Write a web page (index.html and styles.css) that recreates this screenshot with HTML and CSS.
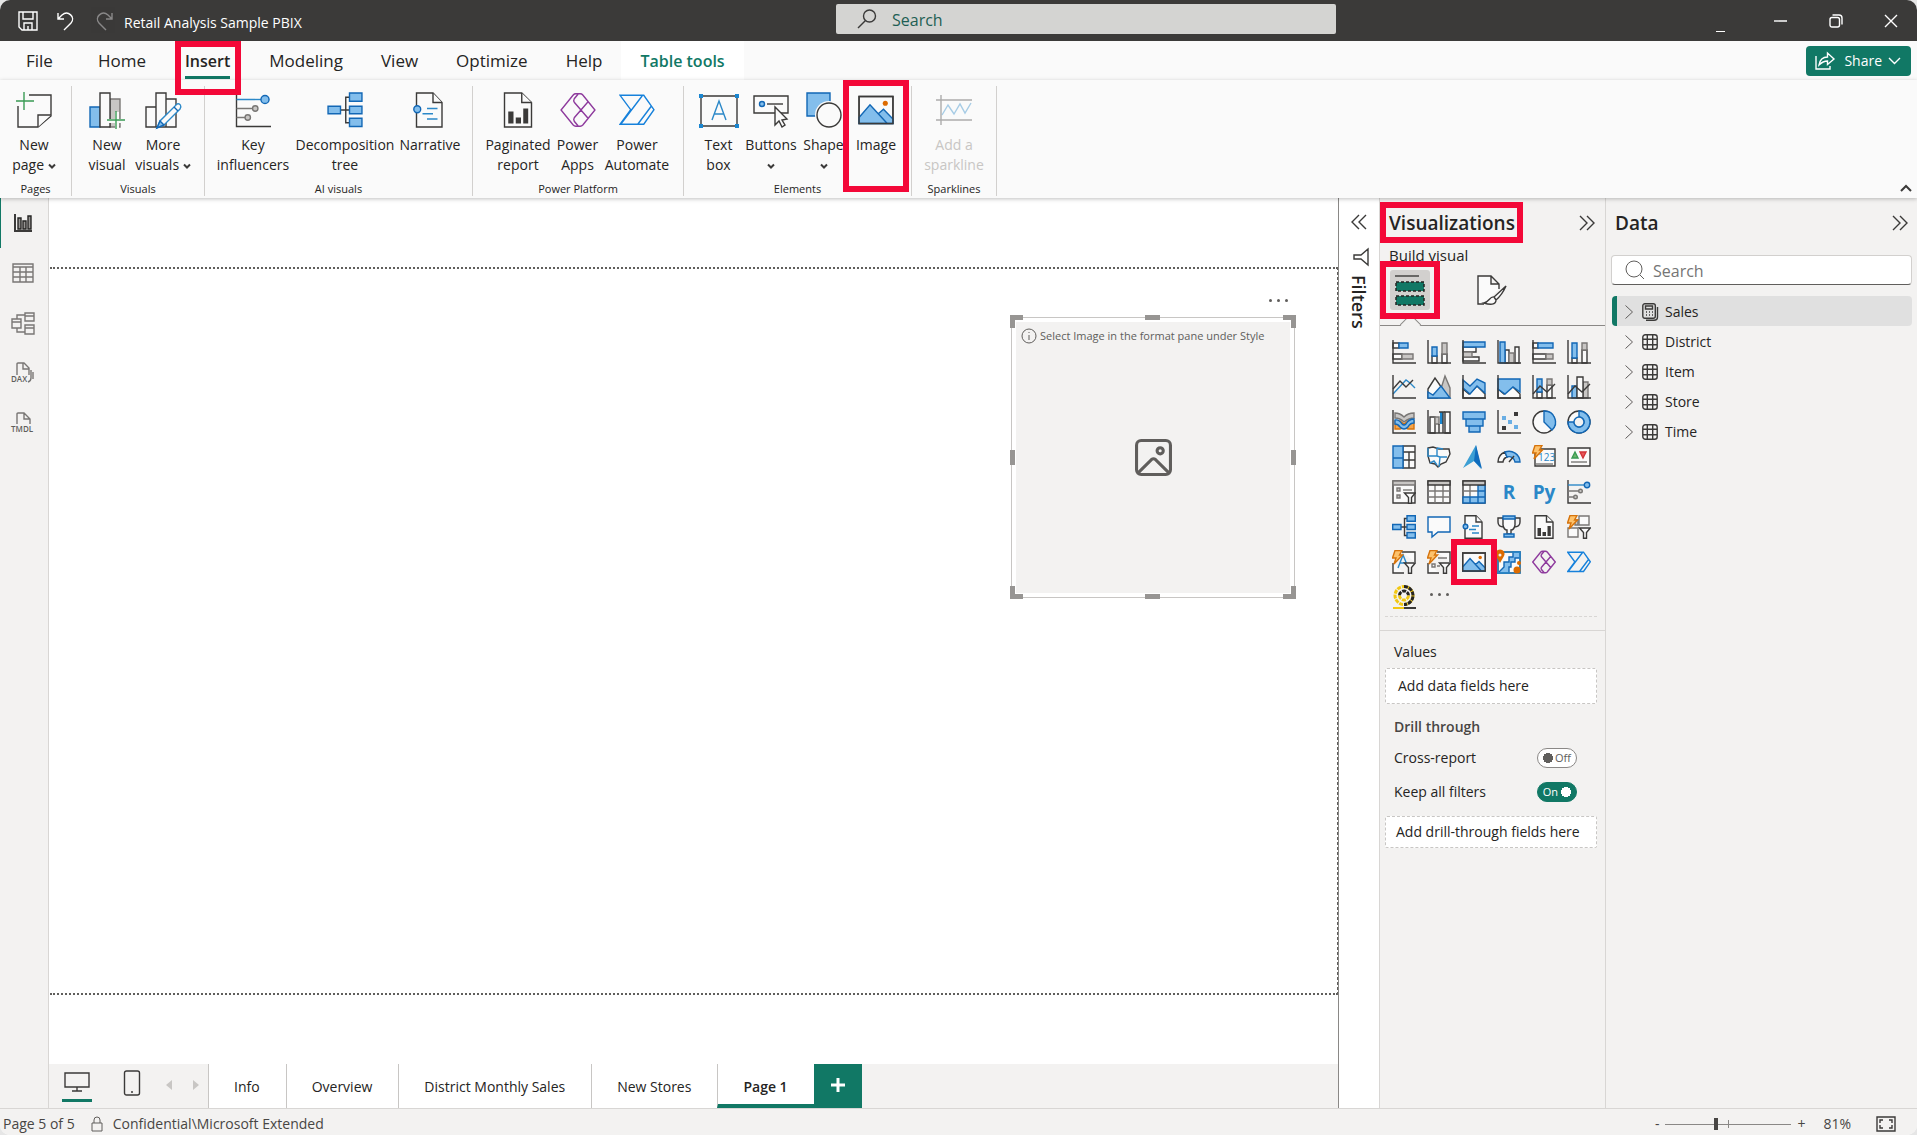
FILE: index.html
```
<!DOCTYPE html>
<html lang="en">
  <head>
    <meta charset="utf-8" />
    <meta name="viewport" content="width=device-width, initial-scale=1" />
    <title>Retail Analysis Sample PBIX</title>
    <link rel="stylesheet" href="styles.css">
  </head>
  <body>
    <!-- shared icons -->
    <svg class="sprite" aria-hidden="true">
      <symbol id="i-axis" viewBox="0 0 24 24"><path class="k" d="M1 0V23H24" /></symbol>
      <symbol id="i-key" viewBox="0 0 24 24">
        <path class="k" d="M1 0V23H24" />
        <path class="bl" d="M1 5H18" /><path class="gl" d="M1 11H12M1 17H7" />
        <circle class="b" cx="20" cy="5" r="2.7" /><circle class="g" cx="13.5" cy="11" r="1.8" /><circle class="g" cx="8.500" cy="17" r="1.8" />
      </symbol>
      <symbol id="i-tree" viewBox="0 0 24 24">
        <path class="k" d="M9 12H15M15 3.500H12.500V20.500H15" />
        <path class="b" d="M.7 9.500H9V14.500H.7ZM15 .7H23.300V6.200H15ZM15 9.500H23.300V14.500H15ZM15 17.500H23.300V23H15Z" />
      </symbol>
      <symbol id="i-narrative" viewBox="0 0 24 24">
        <path class="w" d="M3 .7H14L20 7V23.300H3Z" /><path class="w" d="M14 .7V7H20" />
        <path class="bl" d="M10 11H17M7 14.500H14M10 18H17" />
        <circle class="b" cx="3.500" cy="11.500" r="2.300" />
      </symbol>
      <symbol id="i-paginated" viewBox="0 0 24 24">
        <path class="w" d="M3 .7H14.500L21 7V23.300H3Z" /><path class="w" d="M14.500 .7V7H21" />
        <path class="solid" d="M5.500 13H9V21H5.500ZM10.500 17H14V21H10.500ZM15.500 11H18.800V21H15.500Z" />
      </symbol>
      <symbol id="i-apps" viewBox="0 0 24 24">
        <path class="pl" d="M10.500 1.200H13.500Q14.500 1.200 15.200 2L23.300 12L15.200 22Q14.500 22.800 13.500 22.800H10.500Q9.500 22.800 8.800 22L.7 12L8.800 2Q9.500 1.200 10.500 1.200ZM12 1.500L9.500 4.500Q8.800 5.800 9.500 6.800L18.700 17.500M18.700 6.500L9.500 17.200Q8.800 18.200 9.500 19.500L12 22.500" />
      </symbol>
      <symbol id="i-automate" viewBox="0 0 24 24">
        <path class="fl" d="M.7 2.200H16.500L23.300 11.800L16.500 21.500H.7L7.800 11.800ZM15.500 2.500L1.500 21M21.500 9.500L12.500 21.500" />
      </symbol>
      <symbol id="i-image" viewBox="0 0 24 24">
        <path class="w" d="M.7 3H23.300V21H.7Z" />
        <path class="b" d="M.7 17L8 8.500L13.500 14.500L17 11.500L23.300 18V21H.7ZM13.500 14.500L19.500 21" />
        <path class="k" d="M.7 3H23.300V21H.7Z" /><circle class="orange" cx="18.200" cy="7.500" r="1.700" />
      </symbol>
      <symbol id="i-funnel" viewBox="0 0 24 24"><path class="w" d="M12.500 13H23.300L19.500 17.500V23.300H16.500V17.500Z" /></symbol>
      <symbol id="i-bolt" viewBox="0 0 24 24"><path class="bolt" d="M3 .5H10L7.500 5H10.500L2 14L4 8H.5Z" /></symbol>
      <symbol id="i-down" viewBox="0 0 8 8"><path class="thick" d="M1 2.500L4 5.500L7 2.500" /></symbol>
      <symbol id="i-right2" viewBox="0 0 16 16"><path class="k" d="M1 1L8 8L1 15M8 1L15 8L8 15" /></symbol>
      <symbol id="i-left2" viewBox="0 0 16 16"><path class="k" d="M8 1L1 8L8 15M15 1L8 8L15 15" /></symbol>
      <symbol id="i-chev" viewBox="0 0 8 14"><path class="tl" d="M.5 .5L7.500 7L.5 13.500" /></symbol>
      <symbol id="i-table" viewBox="0 0 16 16"><rect class="k" x=".8" y=".8" width="14.400" height="14.400" rx="2.500" /><path class="k" d="M5.300 1V15M10.700 1V15M1 5.300H15M1 10.700H15" /></symbol>
    </svg>

    <div class="app">
      <header class="titlebar">
        <div class="title-left">
          <button class="icon-btn" aria-label="Save"><svg width="20" height="20" viewBox="0 0 20 20"><path class="hl" d="M1 1H19V19H4L1 16ZM5 1V8H15V1M6 19V12H14V19M10 15V19" /></svg></button>
          <button class="icon-btn" aria-label="Undo"><svg width="20" height="20" viewBox="0 0 20 20"><path class="hl" d="M2 2V8H8M2 8L6 4C12 -1 20 6 15 12L8 19" /></svg></button>
          <button class="icon-btn dim" aria-label="Redo"><svg width="20" height="20" viewBox="0 0 20 20"><path class="hl" d="M18 2V8H12M18 8L14 4C8 -1 0 6 5 12L12 19" /></svg></button>
          <h1 class="doc-title">Retail Analysis Sample PBIX</h1>
        </div>
        <label class="top-search">
          <svg width="20" height="20" viewBox="0 0 20 20"><circle class="k" cx="12.500" cy="7" r="6" /><path class="k" d="M8.500 11.500L1 19" /></svg>
          <input type="text" placeholder="Search" aria-label="Search" />
        </label>
        <div class="window-controls">
          <span class="account"></span>
          <button class="icon-btn" aria-label="Minimize"><svg width="14" height="14" viewBox="0 0 14 14"><path class="hl" d="M0 7H13" /></svg></button>
          <button class="icon-btn" aria-label="Restore"><svg width="14" height="14" viewBox="0 0 14 14"><rect class="hl" x="1" y="3.500" width="9.500" height="9.500" rx="2" /><path class="hl" d="M3.500 1H10Q13 1 13 4V10.500" /></svg></button>
          <button class="icon-btn" aria-label="Close"><svg width="14" height="14" viewBox="0 0 14 14"><path class="hl" d="M1 1L13 13M13 1L1 13" /></svg></button>
        </div>
      </header>

      <nav class="menu">
        <button class="menu-tab file">File</button>
        <button class="menu-tab">Home</button>
        <button class="menu-tab active">Insert<span class="mark mark-insert"></span></button>
        <button class="menu-tab">Modeling</button>
        <button class="menu-tab">View</button>
        <button class="menu-tab">Optimize</button>
        <button class="menu-tab">Help</button>
        <button class="menu-tab context">Table tools</button>
        <button class="share">
          <svg width="20" height="20" viewBox="0 0 20 20"><path class="hl" d="M1 5V18H15V15M4 14C5 8 8 6 12.500 6V2L19 8L12.500 13.500V10C9 10 7 11 4 14Z" /></svg>
          Share
          <svg width="13" height="8" viewBox="0 0 13 8"><path class="hl" d="M1 1L6.500 6.500L12 1" /></svg>
        </button>
      </nav>

      <div class="ribbon">
        <section class="group pages">
          <div class="tools">
            <button class="tool"><svg class="tool-icon" viewBox="0 0 36 36"><path class="w" d="M13 3H35V24L22 35H2V14" /><path class="w" d="M35 23H22V35" /><path class="add" d="M8 0V18M0 9H18" /></svg><span>New<br />page <svg class="caret"><use href="#i-down" /></svg></span></button>
          </div>
          <h2>Pages</h2>
        </section>
        <section class="group visuals">
          <div class="tools">
            <button class="tool"><svg class="tool-icon" viewBox="0 0 36 36"><path class="g" d="M21 7H31V35H21Z" /><path class="b" d="M1 15H11V35H1Z" /><path class="w" d="M11 1H21V35H11Z" /><path class="cover" d="M28 20V36M18 29H36" /><path class="add" d="M27 19V37M18 28H36" /></svg><span>New<br />visual</span></button>
            <button class="tool"><svg class="tool-icon" viewBox="0 0 36 36"><path class="w" d="M21 7H31V35H21ZM1 15H11V35H1ZM11 1H21V35H11Z" /><path class="pencil" d="M12 36L15 29L32 12C35 11 37 14 35 17L19 33Z" /><path class="b" d="M12 36L15 29L19 33ZM29 15L33 19" /></svg><span>More<br />visuals <svg class="caret"><use href="#i-down" /></svg></span></button>
          </div>
          <h2>Visuals</h2>
        </section>
        <section class="group ai">
          <div class="tools">
            <button class="tool wide"><svg class="tool-icon"><use href="#i-key" /></svg><span>Key<br />influencers</span></button>
            <button class="tool widest"><svg class="tool-icon"><use href="#i-tree" /></svg><span>Decomposition<br />tree</span></button>
            <button class="tool mid"><svg class="tool-icon"><use href="#i-narrative" /></svg><span>Narrative</span></button>
          </div>
          <h2>AI visuals</h2>
        </section>
        <section class="group platform">
          <div class="tools">
            <button class="tool mid"><svg class="tool-icon"><use href="#i-paginated" /></svg><span>Paginated<br />report</span></button>
            <button class="tool narrow"><svg class="tool-icon"><use href="#i-apps" /></svg><span>Power<br />Apps</span></button>
            <button class="tool mid"><svg class="tool-icon"><use href="#i-automate" /></svg><span>Power<br />Automate</span></button>
          </div>
          <h2>Power Platform</h2>
        </section>
        <section class="group elements">
          <div class="tools">
            <button class="tool narrow"><svg class="tool-icon text-icon" viewBox="0 0 40 36"><path class="w" d="M2 4H38V34H2Z" /><path class="al" d="M13 28L20 9L27 28M15.500 22H24.500" /><path class="blue" d="M0 2H4V6H0ZM36 2H40V6H36ZM0 32H4V36H0ZM36 32H40V36H36Z" /></svg><span>Text<br />box</span></button>
            <button class="tool"><svg class="tool-icon" viewBox="0 0 36 36"><path class="w" d="M1 4H35V21H1Z" /><circle class="b" cx="9" cy="12" r="2.500" /><path class="k" d="M14 12H30" /><path class="w" d="M22 15V33L26 29L29 35L32 33L29 28L34 27Z" /></svg><span>Buttons<br /><svg class="caret"><use href="#i-down" /></svg></span></button>
            <button class="tool narrow"><svg class="tool-icon" viewBox="0 0 36 36"><path class="b" d="M1 1H24V24H1Z" /><circle class="cover-fill" cx="23" cy="23" r="14" /><circle class="w" cx="23" cy="23" r="12" /></svg><span>Shape<br /><svg class="caret"><use href="#i-down" /></svg></span></button>
            <button class="tool"><svg class="tool-icon"><use href="#i-image" /></svg><span>Image</span><span class="mark mark-image"></span></button>
          </div>
          <h2>Elements</h2>
        </section>
        <section class="group spark">
          <div class="tools">
            <button class="tool wide" disabled><svg class="tool-icon" viewBox="0 0 36 36"><path class="al" d="M6 23L12 13L18 22L24 12L29 21L35 11" /><path class="k" d="M5 3V33M0 8H36M0 28H36" /></svg><span>Add a<br />sparkline</span></button>
          </div>
          <h2>Sparklines</h2>
        </section>
        <button class="collapse" aria-label="Collapse ribbon"><svg width="12" height="8" viewBox="0 0 12 8"><path class="thick" d="M1 7L6 2L11 7" /></svg></button>
      </div>

      <main class="workspace">
        <nav class="rail">
          <button class="rail-btn active" aria-label="Report view"><svg width="22" height="22" viewBox="0 0 22 22"><path class="thick" d="M3 2V19H20" /><path class="gd" d="M6 6H9V17H6ZM11 9H14V17H11ZM16 4H19V17H16Z" /></svg></button>
          <button class="rail-btn" aria-label="Table view"><svg width="22" height="22" viewBox="0 0 22 22"><path class="gl" d="M1 2H21V20H1ZM1 5H21M1 10H21M1 15H21M8 5V20M14 5V20" /></svg></button>
          <button class="rail-btn" aria-label="Model view"><svg width="24" height="24" viewBox="0 0 24 24"><path class="gl" d="M1 8H10V17H1ZM1 11H10M14 2H23V10H14ZM14 5H23M14 14H23V23H14ZM14 17H23M6 8V4H14M6 17V21H14" /></svg></button>
          <button class="rail-btn" aria-label="DAX query view"><svg width="24" height="24" viewBox="0 0 24 24"><path class="gl" d="M6 14V3Q6 2 7 2H13L18 7V14M12 2V8H18M20 9V17Q20 20 17 21M22 11V18" /><text x="0" y="21">DAX</text></svg></button>
          <button class="rail-btn" aria-label="TMDL view"><svg width="24" height="24" viewBox="0 0 24 24"><path class="gl" d="M6 13V3Q6 2 7 2H13L19 8V13M13 2V8H19" /><text x="0" y="21">TMDL</text></svg></button>
        </nav>

        <div class="center">
          <div class="canvas">
            <div class="page">
              <div class="visual">
                <button class="more" aria-label="More options"><i></i><i></i><i></i></button>
                <div class="visual-body">
                  <p class="hint"><svg width="16" height="16" viewBox="0 0 16 16"><circle class="tl" cx="8" cy="8" r="7" /><path class="tl" d="M8 7V12M8 4V5" /></svg>Select Image in the format pane under Style</p>
                  <svg class="picture" viewBox="0 0 36 36"><rect x="1.500" y="1.500" width="33" height="33" rx="4.500" /><circle cx="24.500" cy="11.500" r="3" /><path d="M3 33L16 20Q18 18.500 20 20L33 33" /></svg>
                </div>
                <span class="grip nw"></span><span class="grip ne"></span><span class="grip sw"></span><span class="grip se"></span>
                <span class="grip n"></span><span class="grip s"></span><span class="grip w-side"></span><span class="grip e-side"></span>
              </div>
            </div>
          </div>
          <div class="page-tabs">
            <div class="layouts">
              <button class="layout-btn active" aria-label="Desktop layout"><svg width="26" height="26" viewBox="0 0 26 26"><path class="k" d="M1 3H25V17H1ZM13 17V21M8 21H18" /></svg></button>
              <button class="layout-btn" aria-label="Mobile layout"><svg width="18" height="26" viewBox="0 0 18 26"><rect class="k" x="1.500" y="1" width="15" height="24" rx="2" /><path class="k" d="M8 22H10" /></svg></button>
              <button class="step" aria-label="Previous page"><svg width="6" height="10" viewBox="0 0 6 10"><path d="M6 0V10L0 5Z" /></svg></button>
              <button class="step" aria-label="Next page"><svg width="6" height="10" viewBox="0 0 6 10"><path d="M0 0V10L6 5Z" /></svg></button>
            </div>
            <button class="page-tab">Info</button>
            <button class="page-tab">Overview</button>
            <button class="page-tab">District Monthly Sales</button>
            <button class="page-tab">New Stores</button>
            <button class="page-tab active">Page 1</button>
            <button class="new-page" aria-label="New page"><svg width="14" height="14" viewBox="0 0 14 14"><path d="M7 0V14M0 7H14" /></svg></button>
          </div>
        </div>

        <aside class="filters">
          <button class="icon-btn" aria-label="Expand filters"><svg width="16" height="16"><use href="#i-left2" /></svg></button>
          <svg width="16" height="18" viewBox="0 0 16 18"><path class="k" d="M15 1V17L8 11H1V7H8Z" /></svg>
          <h2>Filters</h2>
        </aside>

        <aside class="viz">
          <div class="pane-head">
            <h2>Visualizations<span class="mark mark-title"></span></h2>
            <button class="icon-btn" aria-label="Collapse visualizations"><svg width="16" height="16"><use href="#i-right2" /></svg></button>
          </div>
          <p class="build-label">Build visual</p>
          <div class="modes">
            <button class="mode active" aria-label="Build visual"><svg width="32" height="32" viewBox="0 0 32 32"><path class="k" d="M1 2H25" /><path class="slot" d="M2 8H30V17H2ZM2 22H30V31H2Z" /></svg><span class="mark mark-mode"></span></button>
            <button class="mode" aria-label="Format visual"><svg width="32" height="32" viewBox="0 0 32 32"><path class="w" d="M8 30H2V2H15L23 10V15M15 2V10H23" /><path class="w" d="M30 12L18 23L20 26Q26 21 30 12ZM18 23C14 22 13 28 8 29C14 31 20 31 20 26Z" /></svg></button>
          </div>
          <div class="viz-grid">
            <button aria-label="Stacked bar chart"><svg viewBox="0 0 24 24"><path class="w" d="M1 3H7V8H1ZM1 14H10V19H1Z" /><path class="b" d="M7 3H16V8H7Z" /><path class="g" d="M10 14H21V19H10Z" /><use href="#i-axis" /></svg></button>
            <button aria-label="Stacked column chart"><svg viewBox="0 0 24 24"><path class="w" d="M5 16H10V23H5ZM15 14H20V23H15Z" /><path class="b" d="M5 7H10V16H5Z" /><path class="g" d="M15 3H20V14H15Z" /><use href="#i-axis" /></svg></button>
            <button aria-label="Clustered bar chart"><svg viewBox="0 0 24 24"><path class="w" d="M1 7H14V12H1ZM1 17H17V21H1Z" /><path class="b" d="M1 2H23V7H1Z" /><path class="g" d="M1 12H10V17H1Z" /><use href="#i-axis" /></svg></button>
            <button aria-label="Clustered column chart"><svg viewBox="0 0 24 24"><path class="w" d="M8 10H12V23H8ZM18 7H22V23H18Z" /><path class="b" d="M3 2H8V23H3Z" /><path class="g" d="M12 13H17V23H12Z" /><use href="#i-axis" /></svg></button>
            <button aria-label="100% stacked bar chart"><svg viewBox="0 0 24 24"><path class="w" d="M1 3H6V8H1ZM1 14H14V19H1Z" /><path class="b" d="M6 3H21V8H6Z" /><path class="g" d="M14 14H21V19H14Z" /><use href="#i-axis" /></svg></button>
            <button aria-label="100% stacked column chart"><svg viewBox="0 0 24 24"><path class="w" d="M5 18H10V23H5ZM15 10H20V23H15Z" /><path class="b" d="M5 3H10V18H5Z" /><path class="g" d="M15 3H20V10H15Z" /><use href="#i-axis" /></svg></button>

            <button aria-label="Line chart"><svg viewBox="0 0 24 24"><path class="bl" d="M1 19L14 5L18 8L23 13" /><path class="k" d="M1 14L8 6L14 12L21 5" /><use href="#i-axis" /></svg></button>
            <button aria-label="Area chart"><svg viewBox="0 0 24 24"><path class="g" d="M11 23L18 1L23 13V23Z" /><path class="w" d="M1 14L8 3L17 16L10 23H1Z" /><path class="b" d="M1 17L6 20L14 11L23 23H1Z" /></svg></button>
            <button aria-label="Stacked area chart"><svg viewBox="0 0 24 24"><path class="w" d="M1 14L7 19L15 11L23 19V23H1Z" /><path class="b" d="M1 5L8 11L15 4L23 8V18L15 11L8 19L1 13Z" /><use href="#i-axis" /></svg></button>
            <button aria-label="100% stacked area chart"><svg viewBox="0 0 24 24"><path class="w" d="M1 14L7 19L15 11L23 19V23H1Z" /><path class="b" d="M1 4H23V17L16 12L8 19L1 14Z" /><use href="#i-axis" /></svg></button>
            <button aria-label="Line and stacked column chart"><svg viewBox="0 0 24 24"><path class="w" d="M5 17H10V23H5ZM15 10H20V23H15Z" /><path class="b" d="M5 4H10V17H5Z" /><path class="g" d="M15 4H20V10H15Z" /><path class="k" d="M1 19L8 11L15 17L23 9" /><use href="#i-axis" /></svg></button>
            <button aria-label="Line and clustered column chart"><svg viewBox="0 0 24 24"><path class="g" d="M16 7H21V23H16Z" /><path class="b" d="M5 11H10V23H5Z" /><path class="w" d="M10 2H16V23H10Z" /><path class="k" d="M1 19L8 11L15 17L23 9" /><use href="#i-axis" /></svg></button>

            <button aria-label="Ribbon chart"><svg viewBox="0 0 24 24"><path class="or" d="M3 11H8L12 14L16 11H22V19H16L12 17L8 19H3Z" /><path class="g" d="M3 3Q8 3 12 7Q16 3 22 3V8Q17 8 12 12Q8 8 3 8Z" /><path class="b" d="M3 10Q7 9 10 14Q12 16 14 14Q17 9 22 9V13Q18 13 16 17Q12 21 8 17Q6 14 3 14Z" /><use href="#i-axis" /></svg></button>
            <button aria-label="Waterfall chart"><svg viewBox="0 0 24 24"><path class="w" d="M3 7H8V23H3ZM18 2H23V23H18Z" /><path class="g" d="M8 7H12V14H8Z" /><path class="blue" d="M13 2H16V14H13Z" /><path class="k" d="M12 14V23M16 2V23M12 2H18" /><use href="#i-axis" /></svg></button>
            <button aria-label="Funnel chart"><svg viewBox="0 0 24 24"><path class="b" d="M1 2H23V9H1ZM4 9H21V16H4ZM7 16H18V22H7Z" /></svg></button>
            <button aria-label="Scatter chart"><svg viewBox="0 0 24 24"><path class="solid" d="M17 2H21V6H17ZM5 16H9V20H5Z" /><path class="dot" d="M5 6H9V10H5ZM11 10H15V14H11ZM17 15H21V19H17Z" /><use href="#i-axis" /></svg></button>
            <button aria-label="Pie chart"><svg viewBox="0 0 24 24"><circle class="w" cx="12" cy="12" r="11" /><path class="b" d="M12 1A11 11 0 0 1 20 20L12 12Z" /></svg></button>
            <button aria-label="Donut chart"><svg viewBox="0 0 24 24"><circle class="w" cx="12" cy="12" r="11" /><path class="b" d="M12 1A11 11 0 1 1 1 12H7A5 5 0 1 0 12 7Z" /><circle class="hole" cx="12" cy="12" r="5" /></svg></button>

            <button aria-label="Treemap"><svg viewBox="0 0 24 24"><path class="w" d="M11 1H23V23H11ZM11 7H23M17 7V15M11 15H23M17 13V23" /><path class="b" d="M1 1H11V23H1ZM1 13H11" /></svg></button>
            <button aria-label="Map"><svg viewBox="0 0 24 24"><path class="w" d="M1 3L6 2L12 4L22 4L23 9L19 17L14 19L11 22L8 19L3 18L1 11Z" /><path class="bl" d="M1 3V11H10V3M10 11L13 12L12 22M13 12H20M10 3L16 4M3 18L7 16L10 20" /></svg></button>
            <button aria-label="Azure map"><svg viewBox="0 0 24 24"><path class="azure" d="M14 0L1 23L12 16L19 24Z" /><path class="azure-dark" d="M14 0L20 24L12 16Z" /></svg></button>
            <button aria-label="Gauge"><svg viewBox="0 0 24 24"><path class="w" d="M1 17A11 11 0 0 1 8 7L10 12A6 6 0 0 0 6 17Z" /><path class="b" d="M8 7A11 11 0 0 1 23 17H18A6 6 0 0 0 10 12Z" /><path class="k" d="M12 17L17 11" /></svg></button>
            <button aria-label="Card"><svg viewBox="0 0 24 24"><path class="w" d="M3 4H23V21H3Z" /><path class="gl" d="M4 19H21" /><text class="digits" x="6" y="16">123</text><use href="#i-bolt" /></svg></button>
            <button aria-label="KPI"><svg viewBox="0 0 24 24"><path class="w" d="M1 3H23V21H1Z" /><path class="up" d="M8 7L11 13H5Z" /><path class="dn" d="M16 13L13 7H19Z" /><path class="gl" d="M4 17H20" /></svg></button>

            <button aria-label="Slicer"><svg viewBox="0 0 24 24"><path class="w" d="M1 1H23V23H1Z" /><path class="g" d="M1 1H23V5H1ZM5 8H8V11H5ZM5 15H8V18H5Z" /><path class="gl" d="M11 10H20" /><use href="#i-funnel" /></svg></button>
            <button aria-label="Table"><svg viewBox="0 0 24 24"><path class="w" d="M1 1H23V23H1Z" /><path class="gl" d="M8 5V23M16 5V23M1 11H23M1 17H23" /><path class="bar" d="M1 1H23V5H1Z" /></svg></button>
            <button aria-label="Matrix"><svg viewBox="0 0 24 24"><path class="w" d="M1 1H23V23H1Z" /><path class="gl" d="M8 5V17M1 11H16" /><path class="b" d="M16 5H23V23H1V17H16ZM16 11H23M16 17H23M8 17V23M16 17V23" /><path class="bar" d="M1 1H23V5H1Z" /></svg></button>
            <button aria-label="R script visual" class="letter">R</button>
            <button aria-label="Python visual" class="letter">Py</button>
            <button aria-label="Key influencers"><svg><use href="#i-key" /></svg></button>

            <button aria-label="Decomposition tree"><svg><use href="#i-tree" /></svg></button>
            <button aria-label="Q&amp;A"><svg viewBox="0 0 24 24"><path class="qa" d="M1 2H23V17H11L5 22V17H1Z" /></svg></button>
            <button aria-label="Narrative"><svg><use href="#i-narrative" /></svg></button>
            <button aria-label="Metrics"><svg viewBox="0 0 24 24"><path class="k" d="M6 3H1V7Q1 12 7 12M18 3H23V7Q23 12 17 12" /><path class="w" d="M6 3H18V10Q17 15 14 15V19H10V15Q7 15 6 10Z" /><path class="b" d="M6 1H18V4H6ZM7 19H17V22H7Z" /></svg></button>
            <button aria-label="Paginated report"><svg><use href="#i-paginated" /></svg></button>
            <button aria-label="Button slicer"><svg viewBox="0 0 24 24"><path class="g" d="M8 5H11V10H8Z" /><path class="wg" d="M12 1H22V10H12ZM1 13H11V22H1Z" /><use href="#i-bolt" /><use href="#i-funnel" /></svg></button>

            <button aria-label="Text slicer"><svg viewBox="0 0 24 24"><path class="w" d="M10 2H23V12M1 13V23H12" /><path class="bl" d="M6 18L11 5L16 17M8 13H14" /><use href="#i-bolt" /><use href="#i-funnel" /></svg></button>
            <button aria-label="List slicer"><svg viewBox="0 0 24 24"><path class="w" d="M10 2H23V12M1 13V23H12" /><path class="gl" d="M11 8H20M5 14H8V17H5ZM10 16H13" /><use href="#i-bolt" /><use href="#i-funnel" /></svg></button>
            <button aria-label="Image"><svg><use href="#i-image" /></svg><span class="mark mark-icon"></span></button>
            <button aria-label="ArcGIS map"><svg viewBox="0 0 24 24"><path class="w" d="M1 2H23V23H1Z" /><path class="b" d="M23 2V8H18V12H14V17H12V23H1L7 17V12H12V7H16V2Z" /><path class="bl" d="M1 2H23V23H1Z" /><path class="orange" d="M3 13L-1 6A4.500 4.500 0 1 1 7 6Z" /><circle class="pane-fill" cx="3" cy="5" r="1.500" /><circle class="orange" cx="20" cy="20" r="3.500" /><circle class="orange" cx="22" cy="13" r="2" /></svg></button>
            <button aria-label="Power Apps"><svg><use href="#i-apps" /></svg></button>
            <button aria-label="Power Automate"><svg><use href="#i-automate" /></svg></button>

            <button aria-label="Custom visual"><svg viewBox="0 0 24 24"><circle class="ring-y" cx="12" cy="10.500" r="9" /><path class="ring-k" d="M12 1.500A9 9 0 0 1 12 19.500" /><path class="ring-s" d="M7.500 10.500A4.500 4.500 0 0 1 16.500 10.500" /><path class="ring-sy" d="M16.500 10.500A4.500 4.500 0 0 1 7.500 10.500" /><path class="orl" d="M1 23H12" /><path class="thick" d="M12 23H24" /></svg></button>
            <button aria-label="Get more visuals" class="dots"><i></i><i></i><i></i></button>
          </div>

          <section class="wells">
            <h3>Values</h3>
            <div class="well">Add data fields here</div>
            <h3 class="strong">Drill through</h3>
            <label class="switch-row">Cross-report<input type="checkbox" class="switch" /><span class="switch-text">Off</span></label>
            <label class="switch-row">Keep all filters<input type="checkbox" class="switch" checked /><span class="switch-text">On</span></label>
            <div class="well drill">Add drill-through fields here</div>
          </section>
        </aside>

        <aside class="data">
          <div class="pane-head">
            <h2>Data</h2>
            <button class="icon-btn" aria-label="Collapse data"><svg width="16" height="16"><use href="#i-right2" /></svg></button>
          </div>
          <label class="data-search">
            <svg width="20" height="20" viewBox="0 0 20 20"><circle class="tl" cx="9" cy="9" r="8" /><path class="tl" d="M15 15L19 19" /></svg>
            <input type="text" placeholder="Search" aria-label="Search data" />
          </label>
          <ul class="tables">
            <li class="selected"><svg class="chev"><use href="#i-chev" /></svg><svg class="tbl" viewBox="0 0 16 18"><rect class="k" x=".8" y=".8" width="12.500" height="14.500" rx="2" /><rect class="k" x="3.500" y="3" width="7" height="3" /><path class="k" d="M4 9H5M7 9H8M10 9H11M4 12H5M7 12H8M10 12H11M15.500 4V14Q15.500 17.200 12 17.200H4" /></svg>Sales</li>
            <li><svg class="chev"><use href="#i-chev" /></svg><svg class="tbl"><use href="#i-table" /></svg>District</li>
            <li><svg class="chev"><use href="#i-chev" /></svg><svg class="tbl"><use href="#i-table" /></svg>Item</li>
            <li><svg class="chev"><use href="#i-chev" /></svg><svg class="tbl"><use href="#i-table" /></svg>Store</li>
            <li><svg class="chev"><use href="#i-chev" /></svg><svg class="tbl"><use href="#i-table" /></svg>Time</li>
          </ul>
        </aside>
      </main>

      <footer class="status">
        <span>Page 5 of 5</span>
        <svg width="12" height="16" viewBox="0 0 12 16"><path class="tl" d="M1 7H11V15H1ZM3 7V4Q3 1 6 1T9 4V7" /></svg>
        <span>Confidential\Microsoft Extended</span>
        <div class="zoom">
          <button aria-label="Zoom out">-</button>
          <input type="range" min="10" max="190" value="81" aria-label="Zoom" />
          <button aria-label="Zoom in">+</button>
          <span class="percent">81%</span>
          <button aria-label="Fit to page"><svg width="20" height="16" viewBox="0 0 20 16"><path class="k" d="M1 1H19V15H1ZM4 7V4H7M13 4H16V7M4 9V12H7M16 9V12H13" /></svg></button>
        </div>
      </footer>
    </div>
  </body>
</html>
```
FILE: styles.css
```
* {
  box-sizing: border-box;
}

body {
  margin: 0;
  background: #e6e6e6;
  color: #252423;
  font-family: "Open Sans", "Noto Sans", sans-serif;
  font-size: 14px;
  line-height: 20px;
}

button,
input {
  font: inherit;
  color: inherit;
}

button {
  padding: 0;
  border: 0;
  background: none;
}

h1,
h2,
h3,
p,
ul {
  margin: 0;
  padding: 0;
  font-size: inherit;
  font-weight: 400;
}

svg {
  display: block;
  flex: none;
  overflow: visible;
}

.sprite {
  position: absolute;
  width: 0;
  height: 0;
}

/* icon paint */
.k, .w, .b, .g, .gd, .bl, .gl, .pl, .fl, .tl, .hl, .al, .add, .thick, .wg, .qa, .or, .orl, .bar, .up, .dn, .bolt, .pencil, .hole {
  fill: none;
  stroke: #3b3a39;
  stroke-width: 1.4px;
  vector-effect: non-scaling-stroke;
}

.w { fill: #fafafa; }
.b { fill: #83beec; stroke: #1267b5; }
.g { fill: #c8c6c4; stroke: #797775; }
.gd { fill: #979593; stroke: #252423; }
.wg { fill: #fafafa; stroke: #797775; }
.bl, .al { stroke: #2b88c8; }
.gl { stroke: #797775; }
.pl { stroke: #8e3a9d; }
.fl { stroke: #1681db; }
.tl { stroke: #605e5c; stroke-width: 1px; }
.hl { stroke: #fff; }
.add { stroke: #3a9b54; }
.thick { stroke-width: 2px; }
.qa { fill: #fafafa; stroke: #1267b5; }
.or { fill: #f5a54a; stroke: #d6730b; }
.orl { stroke: #f2c811; stroke-width: 2px; }
.bar { fill: #c8c6c4; }
.up { fill: #6cb56c; stroke: #3a9b54; }
.dn { fill: #e8575a; stroke: #d13438; }
.bolt { fill: #fdc26c; stroke: #d6730b; }
.pencil { fill: #fafafa; stroke: #2b88c8; }
.hole { fill: #f3f2f1; stroke: #1267b5; }
.solid { fill: #3b3a39; }
.blue { fill: #1a86d0; }
.dot { fill: #69aee4; }
.orange { fill: #dd6b00; }
.azure { fill: #3c9fd4; }
.azure-dark { fill: #0f6cbd; }
.pane-fill { fill: #f3f2f1; }
.cover { fill: none; stroke: #fafafa; stroke-width: 4px; }
.cover-fill { fill: #fafafa; }
.ring-y, .ring-k, .ring-s, .ring-sy { fill: none; stroke: #f2c811; stroke-width: 3px; stroke-dasharray: 4 1; }
.ring-k, .ring-s { stroke: #252423; }
.slot { fill: #117865; stroke: #252423; stroke-width: 1.5px; stroke-dasharray: 3 2; }

.app {
  display: flex;
  flex-direction: column;
  min-height: 100vh;
  border-radius: 10px;
  overflow: hidden;
  background: #fafafa;
}

.icon-btn {
  display: flex;
  align-items: center;
  justify-content: center;
}

/* outlined callouts drawn over the controls */
.mark {
  position: absolute;
  z-index: 3;
  border: 6px solid #f30838;
  pointer-events: none;
}

/* title bar */
.titlebar {
  display: grid;
  grid-template-columns: 836fr 500fr 581fr;
  height: 41px;
  background: #3b3a39;
  color: #fff;
}

.title-left {
  display: flex;
  align-items: center;
  gap: 18px;
  padding-left: 18px;
}

.doc-title {
  padding-top: 4px;
  margin-left: -8px;
  white-space: nowrap;
}

.dim {
  opacity: 0.4;
}

.top-search {
  display: flex;
  align-items: center;
  align-self: start;
  gap: 15px;
  height: 30px;
  margin-top: 4px;
  padding-left: 21px;
  border-radius: 2px;
  background: #d4d4d2;
}

.top-search input,
.data-search input {
  flex: 1;
  min-width: 0;
  padding: 2px 0 0;
  border: 0;
  outline: 0;
  background: none;
  font-size: 16px;
}

.top-search input::placeholder {
  color: #1e5f54;
  opacity: 1;
}

.window-controls {
  display: flex;
  align-items: center;
  justify-content: flex-end;
  gap: 41px;
  padding-right: 19px;
}

.account {
  width: 9px;
  height: 1px;
  margin: 22px 8px 0 0;
  background: #fff;
}

/* menu */
.menu {
  display: flex;
  height: 39px;
  font-size: 17px;
}

.menu-tab {
  position: relative;
  padding: 0 19px;
}

.menu-tab.file {
  padding: 0 26px;
}

.menu-tab.active {
  padding: 0 20px;
  font-size: 16px;
  font-weight: 600;
}

.menu-tab.active::after {
  content: "";
  position: absolute;
  right: 20px;
  bottom: 1px;
  left: 20px;
  height: 3px;
  background: #117865;
}

.menu-tab.context {
  background: #fff;
  color: #117865;
  font-size: 16px;
  font-weight: 600;
}

.mark-insert {
  top: 0;
  right: 9px;
  left: 10px;
  height: 54px;
}

.share {
  display: flex;
  align-items: center;
  align-self: flex-start;
  height: 30px;
  margin: 5px 6px 0 auto;
  padding: 0 10px 0 9px;
  gap: 6px;
  border-radius: 4px;
  background: #117865;
  color: #fff;
  font-size: 14px;
}

.share svg:first-child {
  margin-right: 3px;
}

/* ribbon */
.ribbon {
  position: relative;
  z-index: 2;
  display: flex;
  height: 118px;
  padding: 6px 0 2px;
  box-shadow: 0 1px 4px rgba(0, 0, 0, 0.25);
}

.group {
  display: flex;
  flex-direction: column;
  justify-content: space-between;
  border-right: 1px solid #d2d0ce;
}

.group h2 {
  font-size: 11px;
  line-height: 14px;
  text-align: center;
}

.tools {
  display: flex;
}

.tool {
  position: relative;
  display: flex;
  flex-direction: column;
  align-items: center;
  width: 56px;
  padding-top: 6px;
  white-space: nowrap;
}

.tool-icon {
  width: 36px;
  height: 36px;
  margin-bottom: 7px;
}

.text-icon {
  width: 40px;
}

.tool.narrow { width: 51px; }
.tool.mid { width: 68px; }
.tool.wide { width: 82px; }
.tool.widest { width: 102px; }

.tool:disabled {
  color: #c8c6c4;
}

.tool:disabled svg {
  opacity: 0.4;
}

.caret {
  display: inline-block;
  width: 8px;
  height: 8px;
}

.pages .tools { width: 71px; padding-left: 6px; }
.visuals .tools { width: 132px; padding-left: 7px; }
.ai .tools { width: 267px; padding-left: 7px; }
.platform .tools { width: 210px; padding-left: 11px; }
.elements .tools { width: 227px; padding-left: 9px; }
.elements .tool { width: 54px; }
.elements .tool.narrow { width: 51px; }
.spark .tools { width: 84px; padding-left: 1px; }

.mark-image {
  top: -6px;
  right: -6px;
  left: -6px;
  height: 112px;
}

.collapse {
  margin: auto 5px 4px auto;
}

/* workspace */
.workspace {
  display: flex;
  flex: 1;
  min-height: 0;
  background: #f3f2f1;
}

.rail {
  display: flex;
  flex: none;
  flex-direction: column;
  width: 49px;
  border-right: 1px solid #d8d6d4;
}

.rail-btn {
  display: flex;
  align-items: center;
  justify-content: center;
  height: 50px;
  padding-right: 4px;
  border-left: 1px solid transparent;
}

.rail-btn.active {
  border-color: #117865;
}

.rail-btn text {
  fill: #605e5c;
  font: 600 8px "Open Sans", sans-serif;
}

.center {
  display: flex;
  flex: 1;
  flex-direction: column;
  min-width: 0;
}

.canvas {
  flex: 1;
  padding: 69px 0 69px 1px;
  background: #fff;
}

.page {
  position: relative;
  height: 100%;
  min-height: 600px;
  border-top: 2px dotted #605e5c;
  border-right: 1px dashed #605e5c;
  border-bottom: 2px dotted #605e5c;
}

/* the visual is placed freely on the report page */
.visual {
  position: absolute;
  top: 48px;
  right: 42px;
  width: 284px;
  height: 281px;
  padding: 4px;
  border: 1px solid #c8c6c4;
}

.visual-body {
  display: grid;
  grid-template-rows: auto 1fr;
  height: 100%;
  background: #f3f2f1;
}

.hint {
  display: flex;
  align-items: center;
  gap: 3px;
  height: 28px;
  padding-left: 5px;
  color: #605e5c;
  font-size: 11px;
  white-space: nowrap;
}

.picture {
  width: 37px;
  height: 37px;
  margin: 89px auto 0;
  fill: none;
  stroke: #605e5c;
  stroke-width: 3px;
}

.more {
  position: absolute;
  top: -19px;
  right: 6px;
}

.more,
.dots {
  display: flex;
  align-items: center;
  gap: 5px;
}

.more i,
.dots i {
  width: 3px;
  height: 3px;
  border-radius: 50%;
  background: #605e5c;
}

.grip {
  position: absolute;
  border: 0 solid #979593;
  width: 13px;
  height: 13px;
}

.nw { top: -3px; left: -2px; border-width: 5px 0 0 5px; }
.ne { top: -3px; right: -2px; border-width: 5px 5px 0 0; }
.sw { bottom: -2px; left: -2px; border-width: 0 0 5px 5px; }
.se { right: -2px; bottom: -2px; border-width: 0 5px 5px 0; }
.n, .s { left: calc(50% - 8px); width: 15px; height: 5px; border-width: 5px 0 0; }
.n { top: -3px; }
.s { bottom: -2px; }
.w-side, .e-side { top: calc(50% - 8px); width: 5px; height: 15px; border-width: 0 0 0 5px; }
.w-side { left: -2px; }
.e-side { right: -2px; }

/* page tabs */
.page-tabs {
  display: flex;
  height: 44px;
}

.layouts {
  display: flex;
  flex: none;
  width: 159px;
  padding-left: 13px;
}

.layout-btn {
  display: flex;
  flex: none;
  align-items: flex-start;
  justify-content: center;
  width: 30px;
  margin-right: 25px;
  padding-top: 6px;
}

.layout-btn.active {
  height: 38px;
  border-bottom: 3px solid #117865;
}

.step {
  flex: none;
  width: 6px;
  margin-right: 21px;
  padding-bottom: 2px;
  fill: #c8c6c4;
}

.layout-btn + .step {
  margin-left: -6px;
}

.step:last-child {
  margin-right: 0;
}

.page-tab {
  padding: 2px 26px 0 25px;
  border-left: 1px solid #c8c6c4;
  background: #fff;
  white-space: nowrap;
}

.page-tab.active {
  padding-top: 6px;
  border-bottom: 4px solid #117865;
  font-weight: 600;
}

.new-page {
  width: 48px;
  padding: 0 17px 2px;
  background: #117865;
}

.new-page path {
  stroke: #fff;
  stroke-width: 3px;
}

/* filters */
.filters {
  display: flex;
  flex: none;
  flex-direction: column;
  align-items: center;
  width: 42px;
  padding-top: 16px;
  border-right: 1px solid #d8d6d4;
  border-left: 1px solid #8a8886;
  background: #fff;
}

.filters > svg {
  margin: 18px 0 0 4px;
}

.filters h2 {
  margin-top: 9px;
  font-size: 18px;
  font-weight: 600;
  writing-mode: vertical-rl;
}

/* side panes */
.viz {
  flex: none;
  width: 226px;
  border-right: 1px solid #d8d6d4;
}

.pane-head {
  display: flex;
  align-items: center;
  justify-content: space-between;
  height: 47px;
  padding: 2px 10px 0 9px;
}

.pane-head h2 {
  position: relative;
  font-size: 19px;
  font-weight: 600;
}

.mark-title {
  top: -11px;
  right: -8px;
  left: -9px;
  height: 41px;
}

.build-label {
  padding-left: 9px;
  font-size: 15px;
}

.modes {
  display: flex;
  gap: 42px;
  height: 61px;
  padding: 5px 0 0 10px;
  border-bottom: 1px solid #8a8886;
}

.mode {
  position: relative;
  width: 40px;
  height: 40px;
  padding: 4px;
  border-radius: 3px;
}

.mode.active {
  background: #d2d0ce;
}

.mode.active::after {
  content: "";
  position: absolute;
  bottom: -22px;
  left: 13px;
  width: 14px;
  height: 14px;
  border: 1px solid #8a8886;
  border-width: 1px 0 0 1px;
  background: #f3f2f1;
  transform: rotate(45deg);
}

.mark-mode {
  top: -9px;
  left: -10px;
  width: 60px;
  height: 58px;
}

.viz-grid {
  display: grid;
  grid-template-columns: repeat(6, 24px);
  gap: 11px;
  margin: 14px 8px 0 5px;
  padding: 0 0 7px 7px;
  border-bottom: 1px dashed #d8d6d4;
}

.viz-grid button {
  position: relative;
  height: 24px;
}

.viz-grid svg {
  width: 24px;
  height: 24px;
}

.viz-grid .digits {
  fill: #2b88c8;
  font-size: 10px;
}

.viz-grid .letter {
  color: #2b88c8;
  font-size: 19px;
  font-weight: 700;
}

.viz-grid .dots {
  justify-content: center;
  padding-bottom: 5px;
}

.mark-icon {
  top: -11px;
  left: -11px;
  width: 46px;
  height: 46px;
}

.wells {
  margin-top: 13px;
  padding: 11px 8px 0 5px;
  border-top: 1px solid #d8d6d4;
}

.wells h3 {
  padding-left: 9px;
}

.wells .strong {
  color: #484644;
  font-weight: 600;
}

.well {
  margin: 6px 0 13px;
  padding: 7px 12px;
  border: 1px dashed #c8c6c4;
  border-radius: 2px;
  background: #fff;
  white-space: nowrap;
}

.well.drill {
  margin-top: 7px;
  padding: 5px 10px;
}

.switch-row {
  position: relative;
  display: flex;
  align-items: center;
  justify-content: space-between;
  height: 34px;
  padding: 0 20px 0 9px;
}

.strong + .switch-row {
  margin-top: 4px;
}

.switch {
  width: 40px;
  height: 20px;
  margin: 0;
  border: 1px solid #8a8886;
  border-radius: 10px;
  background: radial-gradient(circle at 10px 9px, #605e5c 5px, transparent 5px) #fff;
  appearance: none;
}

.switch:checked {
  border-color: #117865;
  background: radial-gradient(circle at 28px 9px, #fff 5px, transparent 5px) #117865;
}

.switch-text {
  position: absolute;
  right: 26px;
  color: #605e5c;
  font-size: 11px;
}

.switch:checked + .switch-text {
  right: 39px;
  color: #fff;
}

.data {
  flex: none;
  width: 311px;
}

.data .pane-head {
  padding: 2px 9px 0;
}

.data-search {
  display: flex;
  align-items: center;
  gap: 8px;
  height: 30px;
  margin: 10px 5px 11px;
  padding-left: 13px;
  border: 1px solid #d2d0ce;
  border-bottom-color: #605e5c;
  border-radius: 4px;
  background: #fff;
}

.tables {
  margin: 0 5px 0 6px;
  list-style: none;
}

.tables li {
  display: flex;
  align-items: center;
  height: 30px;
  padding: 1px 0 0 13px;
}

.tables .selected {
  padding-left: 8px;
  border-left: 5px solid #117865;
  border-radius: 4px;
  background: #e0e0e0;
}

.chev {
  width: 8px;
  height: 14px;
  margin-right: 9px;
}

.tbl {
  width: 16px;
  height: 18px;
  margin-right: 7px;
}

/* status bar */
.status {
  display: flex;
  align-items: center;
  height: 27px;
  padding: 4px 21px 0 3px;
  gap: 10px;
  border-top: 1px solid #d8d6d4;
  background: #f3f2f1;
  color: #484644;
}

.status > svg {
  margin-left: 6px;
}

.zoom {
  display: flex;
  align-items: center;
  gap: 6px;
  margin-left: auto;
}

.zoom input {
  width: 126px;
  height: 12px;
  margin: 0;
  background: linear-gradient(#8a8886, #8a8886) center / 100% 1px no-repeat, linear-gradient(#8a8886, #8a8886) center / 1px 8px no-repeat;
  appearance: none;
}

.zoom input::-webkit-slider-thumb {
  width: 4px;
  height: 12px;
  background: #484644;
  appearance: none;
}

.percent {
  margin: 0 19px 0 12px;
}
```
